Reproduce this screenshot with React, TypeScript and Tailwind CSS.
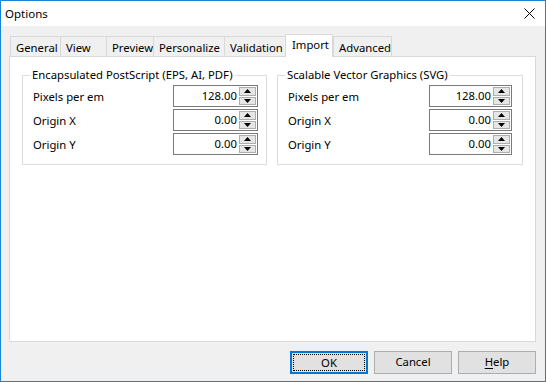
import React from 'react';

const font = { fontFamily: '"Noto Sans", "Open Sans", sans-serif' };

type Tab = { label: string; w: string; active?: boolean };

const tabs: Tab[] = [
  { label: 'General', w: 'w-[50px]' },
  { label: 'View', w: 'w-[46px]' },
  { label: 'Preview', w: 'w-[47px]' },
  { label: 'Personalize', w: 'w-[71px]' },
  { label: 'Validation', w: 'w-[61px]' },
  { label: 'Import', w: 'w-[48px]', active: true },
  { label: 'Advanced', w: 'w-[59px]' },
];

function Arrow({ up }: { up?: boolean }) {
  return (
    <svg width="7" height="4" viewBox="0 0 7 4" className="block">
      {up ? <polygon points="3.5,0 7,4 0,4" fill="#000" /> : <polygon points="0,0 7,0 3.5,4" fill="#000" />}
    </svg>
  );
}

function SpinBox({ value, w }: { value: string; w: string }) {
  return (
    <div className={`${w} h-[22px] border border-[#7a7a7a] bg-white flex`}>
      <div className="flex-1 text-right pr-[2px] leading-[20px] text-[11.3px] text-black">{value}</div>
      <div className="w-[18px] flex flex-col gap-px py-px pr-px">
        <div className="flex-1 border border-[#adadad] bg-[#e6e6e6] flex items-center justify-center">
          <Arrow up />
        </div>
        <div className="flex-1 border border-[#adadad] bg-[#e6e6e6] flex items-center justify-center">
          <Arrow />
        </div>
      </div>
    </div>
  );
}

function Group({ title, w, boxW, pr }: { title: string; w: string; boxW: string; pr: string }) {
  const rows = [
    ['Pixels per em', '128.00'],
    ['Origin X', '0.00'],
    ['Origin Y', '0.00'],
  ];
  return (
    <fieldset className={`${w} border border-[#dcdcdc] pl-[10px] ${pr} pt-[2px] pb-[9px]`}>
      <legend className="ml-[-3px] px-[2px] text-[11.3px] leading-[16px] text-black">{title}</legend>
      <div className="flex flex-col gap-[2px]">
        {rows.map(([label, value]) => (
          <div key={label} className="flex items-center justify-between h-[22px]">
            <span className="text-[11.3px] text-black pt-[3px]">{label}</span>
            <SpinBox value={value} w={boxW} />
          </div>
        ))}
      </div>
    </fieldset>
  );
}

export default function App() {
  return (
    <div style={font} className="w-[546px] h-[382px] border border-[#1883d7] bg-[#f0f0f0] flex flex-col overflow-hidden">
      {/* title bar */}
      <div className="h-[25px] bg-white flex items-center justify-between pl-[4px] pr-[10px]">
        <span className="text-[11.5px] text-black">Options</span>
        <svg width="11" height="11" viewBox="0 0 11 11">
          <path d="M0.5 0.5 L10.5 10.5 M10.5 0.5 L0.5 10.5" stroke="#000" strokeWidth="1" />
        </svg>
      </div>

      <div className="pl-[8px] pt-[8px] flex flex-col">
        {/* tabs */}
        <div className="h-[22px] flex items-end ml-px">
          {tabs.map((t, i) =>
            t.active ? (
              <div
                key={t.label}
                className={`${t.w} h-[23px] -mb-px relative z-10 bg-white border border-b-0 border-[#d9d9d9] pl-[6px] whitespace-nowrap text-[11.3px] leading-[20px] text-black`}
              >
                {t.label}
              </div>
            ) : (
              <div
                key={t.label}
                className={`${t.w} h-[20px] bg-[#f0f0f0] border-t border-l border-[#d9d9d9] ${
                  i === tabs.length - 1 ? 'border-r' : ''
                } pl-[5px] whitespace-nowrap text-[11.3px] leading-[21px] text-black`}
              >
                {t.label}
              </div>
            ),
          )}
        </div>

        {/* page */}
        <div className="w-[527px] h-[286px] bg-white border border-[#d9d9d9] pl-[12px] pt-[10px] flex gap-[10px] items-start">
          <Group title="Encapsulated PostScript (EPS, AI, PDF)" w="w-[245px]" boxW="w-[85px]" pr="pr-[8px]" />
          <Group title="Scalable Vector Graphics (SVG)" w="w-[246px]" boxW="w-[83px]" pr="pr-[10px]" />
        </div>

        {/* buttons */}
        <div className="w-[527px] mt-[9px] flex justify-end gap-[6px]">
          <button className="w-[78px] h-[23px] border-2 border-[#0078d7] bg-[#e1e1e1] p-px">
            <div className="w-full h-full border border-dotted border-black text-[11.3px] leading-[15px] text-black">OK</div>
          </button>
          <button className="w-[78px] h-[23px] border border-[#adadad] bg-[#e1e1e1] text-[11.3px] text-black">Cancel</button>
          <button className="w-[78px] h-[23px] border border-[#adadad] bg-[#e1e1e1] text-[11.3px] text-black">
            <span className="underline underline-offset-2">H</span>elp
          </button>
        </div>
      </div>
    </div>
  );
}
